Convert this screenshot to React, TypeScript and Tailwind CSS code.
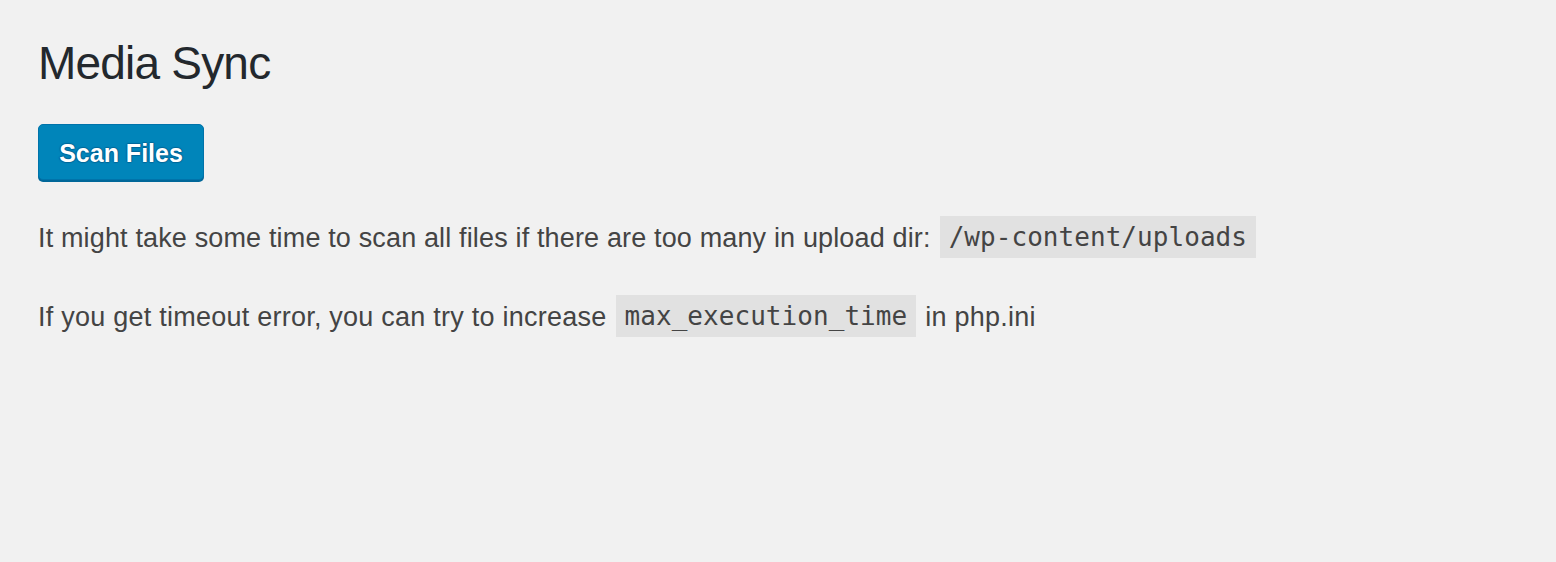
import React from 'react';

const sans = { fontFamily: '"Liberation Sans", Arial, sans-serif' };

function Code({ children }: { children: React.ReactNode }) {
  return (
    <code className="mx-[9px] inline-block bg-[#e1e1e1] px-[9px] py-[5px] font-['DejaVu_Sans_Mono',monospace] text-[26px] leading-[32px] tracking-[0.05px] text-[#444] align-[1px]">
      {children}
    </code>
  );
}

export default function App() {
  return (
    <div
      className="min-h-[562px] bg-[#f1f1f1] px-[38px] pt-[35px] font-['Liberation_Sans',Arial,sans-serif] text-[#444]"
      style={sans}
    >
      <h1 className="text-[46px] leading-[56px] font-normal tracking-[-0.8px] text-[#23282d]">Media Sync</h1>

      <button className="mt-[33px] h-[56px] w-[166px] rounded-[5px] border border-[#0073aa] bg-[#0085ba] pt-[3px] text-[25px] font-bold text-white shadow-[0_2px_0_#006799] [text-shadow:0_-1px_1px_#006799,1px_0_1px_#006799,0_1px_1px_#006799,-1px_0_1px_#006799]">
        Scan Files
      </button>

      <p className="mt-[36px] text-[27px] leading-[42px] tracking-[0.15px]">
        It might take some time to scan all files if there are too many in upload dir:
        <Code>/wp-content/uploads</Code>
      </p>

      <p className="mt-[36px] text-[27px] leading-[42px] tracking-[0.24px]">
        If you get timeout error, you can try to increase
        <Code>max_execution_time</Code>
        in php.ini
      </p>
    </div>
  );
}
